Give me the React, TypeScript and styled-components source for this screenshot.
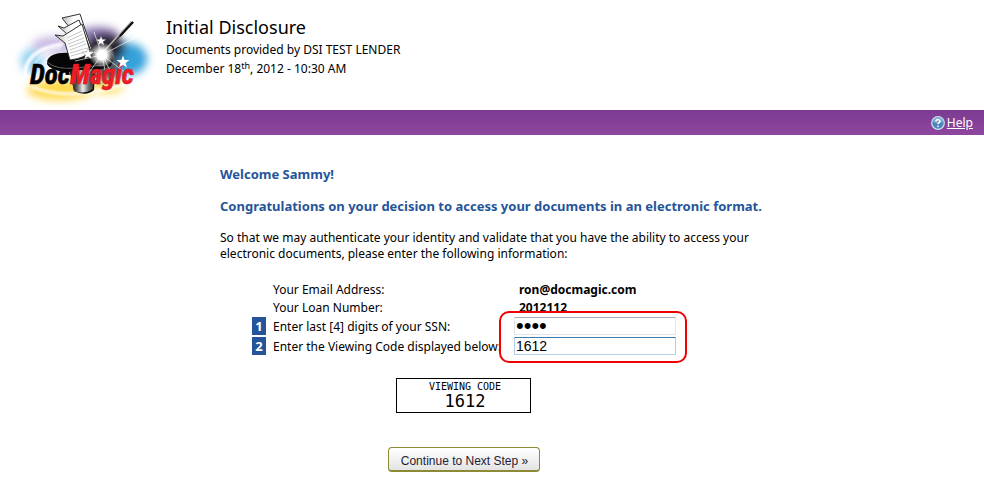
import React, { useState } from "react";
import styled, { createGlobalStyle } from "styled-components";

const sans = `"Noto Sans", "DejaVu Sans Condensed", sans-serif`;

const GlobalStyle = createGlobalStyle`
  *, *::before, *::after { box-sizing: border-box; }
  body {
    margin: 0;
    background: #fff;
    color: #000;
    font: 12px/16px ${sans};
  }
`;

const Header = styled.header`
  display: flex;
  gap: 6px;
  height: 110px;
  padding: 5px 10px 0;
`;

const LogoArt = styled.svg`
  flex: none;
  width: 150px;
  height: 105px;
`;

const HeaderText = styled.div`
  padding-top: 10px;
`;

const Title = styled.h1`
  margin: 0 0 1px;
  font-size: 18px;
  font-weight: 400;
  line-height: 24px;
`;

const Meta = styled.p`
  margin: 0;
  line-height: 19px;

  sup {
    font-size: 9px;
    line-height: 0;
    vertical-align: 4px;
  }
`;

const Bar = styled.nav`
  display: flex;
  align-items: center;
  justify-content: flex-end;
  height: 25px;
  padding: 0 11px;
  background: linear-gradient(#7c3b92, #8e469f);
`;

const HelpLink = styled.a`
  display: flex;
  align-items: center;
  gap: 2px;
  color: #fff;
`;

const Main = styled.main`
  display: flex;
  flex-direction: column;
  max-width: 544px;
  margin: 0 auto;
  padding: 31px 0 20px;
`;

const Lead = styled.h2`
  margin: 0 0 16px;
  color: #25549a;
  font-size: 13px;
  line-height: 16px;
`;

const Intro = styled.p`
  margin: 0 0 19px;
`;

const Form = styled.form`
  display: flex;
  flex-direction: column;
`;

const Fields = styled.div`
  display: flex;
  flex-direction: column;
  padding-left: 32px;
`;

const Row = styled.div`
  display: grid;
  grid-template-columns: 14px 234px 162px;
  column-gap: 7px;
  align-items: center;
  min-height: 18px;
`;

const Value = styled.strong`
  grid-column: 3;
  padding-left: 5px;
`;

const Name = styled.span`
  grid-column: 2;
`;

const EntryGroup = styled.div`
  position: relative;
  display: flex;
  flex-direction: column;
  gap: 2px;
`;

const Marker = styled.span`
  background: #25549a;
  color: #fff;
  font-size: 13px;
  font-weight: 700;
  line-height: 18px;
  text-align: center;
`;

const FieldLabel = styled.label`
  padding-top: 2px;
  white-space: nowrap;
`;

const Entry = styled.input<{ $active?: boolean }>`
  width: 100%;
  height: 18px;
  padding: 0 1px;
  border: 1px solid ${(p) => (p.$active ? "#b5cfe7" : "#e3e3eb")};
  border-top-color: ${(p) => (p.$active ? "#3d7bad" : "#abadb3")};
  border-radius: 1px;
  outline: none;
  background: #fff;
  color: #000;
  font: 14px/16px "Liberation Sans", Arial, sans-serif;

  &[type="password"] {
    font-size: 22px;
  }
`;

const Highlight = styled.span`
  position: absolute;
  top: -6px;
  left: 247px;
  width: 188px;
  height: 52px;
  border: 2px solid #f00000;
  border-radius: 10px;
  pointer-events: none;
`;

const CodeBox = styled.output`
  align-self: center;
  width: 135px;
  height: 35px;
  margin: 23px 57px 0 0;
  border: 1px solid #000;
  padding: 2px 0 0 3px;
  font-family: "DejaVu Sans Mono", monospace;
  text-align: center;
`;

const CodeTitle = styled.span`
  display: block;
  font-size: 10px;
  line-height: 12px;
`;

const Code = styled.span`
  display: block;
  font-size: 17px;
  line-height: 16px;
`;

const Continue = styled.button`
  align-self: center;
  width: 152px;
  height: 25px;
  margin: 34px 57px 0 0;
  padding: 4px 0 0 2px;
  border: 1px solid #8c8a35;
  border-bottom-width: 2px;
  border-radius: 4px;
  background: linear-gradient(#fff, #e4e4e4);
  color: #1e1e32;
  font: 12px/16px "Liberation Sans", Arial, sans-serif;
  white-space: nowrap;
`;

function Logo() {
  const star = "M0-6.5L1.6-2.1 6.4-2 2.6.9 4 5.5 0 2.8-4 5.5-2.6.9-6.4-2-1.6-2.1Z";
  return (
    <LogoArt viewBox="0 0 150 105" role="img" aria-label="DocMagic">
      <defs>
        <filter id="soft" x="-30%" y="-30%" width="160%" height="160%">
          <feGaussianBlur stdDeviation="4" />
        </filter>
        <filter id="fine" x="-30%" y="-30%" width="160%" height="160%">
          <feGaussianBlur stdDeviation="1" />
        </filter>
        <linearGradient id="hat">
          <stop offset="0" stopColor="#111" />
          <stop offset=".25" stopColor="#555" />
          <stop offset=".5" stopColor="#eee" />
          <stop offset=".7" stopColor="#777" />
          <stop offset="1" stopColor="#111" />
        </linearGradient>
        <radialGradient id="burst">
          <stop offset="0" stopColor="#fff" />
          <stop offset=".35" stopColor="#fff" />
          <stop offset="1" stopColor="#fff" stopOpacity="0" />
        </radialGradient>
        <linearGradient id="sheet">
          <stop offset="0" stopColor="#bbb" />
          <stop offset=".4" stopColor="#fff" />
        </linearGradient>
      </defs>
      <g filter="url(#soft)">
        <ellipse cx="47" cy="40" rx="25" ry="9" fill="#cbbbe4" />
        <ellipse cx="88" cy="29" rx="20" ry="7" fill="#8f79b5" />
        <ellipse cx="22" cy="56" rx="11" ry="12" fill="#8ed0ef" />
        <ellipse cx="118" cy="54" rx="19" ry="16" fill="#35a0da" />
        <ellipse cx="50" cy="85" rx="33" ry="10" fill="#ffd84a" />
        <ellipse cx="96" cy="82" rx="18" ry="7" fill="#ffe372" />
        <ellipse cx="95" cy="43" rx="20" ry="15" fill="#25222d" />
        <ellipse cx="97" cy="65" rx="14" ry="12" fill="#555" />
      </g>
      <g filter="url(#fine)" fill="none" stroke="#fff">
        <path d="M15 73Q13 45 53 39" strokeWidth="4" opacity=".9" />
        <path d="M24 60Q30 47 51 43" strokeWidth="2" opacity=".6" />
        <path d="M22 82Q63 98 124 76" strokeWidth="4" opacity=".7" />
      </g>
      <path
        d="M37 57C38 50 48 47 60 48L98 46Q106 51 101 61L85 66 84 85Q76 92 64 86L60 67C48 67 36 63 37 57Z"
        fill="#060606"
      />
      <path d="M60 66L86 64 83 84Q74 90 64 86Z" fill="url(#hat)" />
      <path d="M37 57Q46 65 66 63L94 60" stroke="#777" strokeWidth=".8" fill="none" />
      <g stroke="#333" strokeWidth="1" fill="url(#sheet)">
        <path d="M52 13L70 9 82 45 66 48 60 23Z" />
        <path d="M48 21L54 23 69 15 81 46 62 50 57 29Z" />
        <path d="M45 30L53 31 72 19 80 46Q76 53 60 55L55 38Z" />
      </g>
      <path
        d="M57 33l15-7M58 36l15-7M58 39l16-6M59 42l16-6M60 45l16-6M60 48l17-5M61 51l17-5"
        stroke="#aaa"
        strokeWidth=".7"
      />
      <path d="M95 46L122 17" stroke="#bbb" strokeWidth="3" />
      <path d="M96 46L123 17" stroke="#333" strokeWidth="1.7" />
      <path d="M110 31L123 17" stroke="#111" strokeWidth="2.2" />
      <path
        d="M92 50L67 42M92 50L74 74M92 50L98 80M92 50L120 71M92 50L128 31M92 50L84 27M92 50L107 79M92 50L65 56"
        stroke="#fff"
        strokeWidth=".8"
        opacity=".8"
      />
      <circle cx="92" cy="50" r="13" fill="url(#burst)" />
      <g fill="#fff" stroke="#444" strokeWidth=".3">
        <path d={star} transform="translate(91 36) scale(.8)" />
        <path d={star} transform="translate(78 49) scale(.95)" />
      </g>
      <g
        fontFamily="'Roboto Condensed', 'Liberation Sans', sans-serif"
        fontStyle="italic"
        fontWeight="700"
        fontSize="27"
        paintOrder="stroke"
        strokeWidth=".6"
      >
        <text x="20" y="79" fill="#000" stroke="#000">
          Doc<tspan fill="#ee1c25" stroke="#a80c18">Magic</tspan>
        </text>
      </g>
      <path d={star} transform="translate(113 57)" fill="#fff" />
    </LogoArt>
  );
}

function HelpIcon() {
  return (
    <svg width="14" height="14" viewBox="0 0 14 14" aria-hidden="true">
      <circle cx="7" cy="7" r="6.3" fill="#4c85bc" stroke="#cfe0ef" strokeWidth="1.2" />
      <path d="M2 6A5 5 0 0 1 12 6Q7 8 2 6Z" fill="#8eb8dc" opacity=".7" />
      <path d="M5 5.4C5 3 9 3 9 5.3C9 6.7 7 6.6 7 8.3" fill="none" stroke="#fff" strokeWidth="1.5" />
      <circle cx="7" cy="10.3" r=".9" fill="#fff" />
    </svg>
  );
}

export default function App() {
  const [ssn, setSsn] = useState("1612");
  const [code, setCode] = useState("1612");

  return (
    <>
      <GlobalStyle />
      <Header>
        <Logo />
        <HeaderText>
          <Title>Initial Disclosure</Title>
          <Meta>Documents provided by DSI TEST LENDER</Meta>
          <Meta>
            December 18<sup>th</sup>, 2012 - 10:30 AM
          </Meta>
        </HeaderText>
      </Header>
      <Bar>
        <HelpLink href="#help">
          <HelpIcon />
          Help
        </HelpLink>
      </Bar>
      <Main>
        <Lead>Welcome Sammy!</Lead>
        <Lead>Congratulations on your decision to access your documents in an electronic format.</Lead>
        <Intro>
          So that we may authenticate your identity and validate that you have the ability to access your electronic
          documents, please enter the following information:
        </Intro>
        <Form onSubmit={(e) => e.preventDefault()}>
          <Fields>
            <Row>
              <Name>Your Email Address:</Name>
              <Value>ron@docmagic.com</Value>
            </Row>
            <Row>
              <Name>Your Loan Number:</Name>
              <Value>2012112</Value>
            </Row>
            <EntryGroup>
              <Row>
                <Marker>1</Marker>
                <FieldLabel htmlFor="ssn">Enter last [4] digits of your SSN:</FieldLabel>
                <Entry id="ssn" type="password" value={ssn} onChange={(e) => setSsn(e.target.value)} />
              </Row>
              <Row>
                <Marker>2</Marker>
                <FieldLabel htmlFor="code">Enter the Viewing Code displayed below:</FieldLabel>
                <Entry id="code" type="text" $active value={code} onChange={(e) => setCode(e.target.value)} />
              </Row>
              <Highlight />
            </EntryGroup>
          </Fields>
          <CodeBox>
            <CodeTitle>VIEWING CODE</CodeTitle>
            <Code>1612</Code>
          </CodeBox>
          <Continue type="submit">Continue to Next Step »</Continue>
        </Form>
      </Main>
    </>
  );
}
